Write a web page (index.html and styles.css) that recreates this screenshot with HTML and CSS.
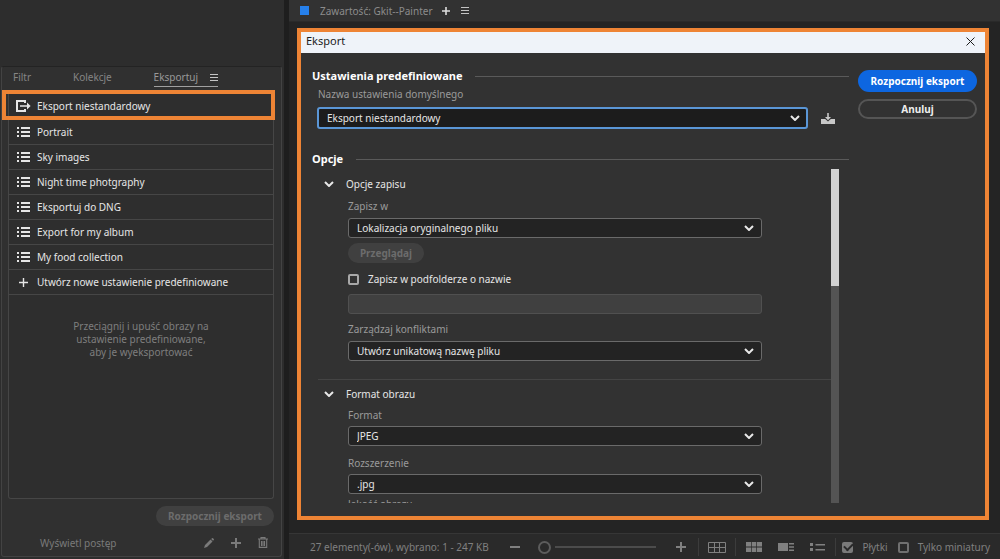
FILE: index.html
```html
<!DOCTYPE html>
<html lang="pl">
<head>
<meta charset="utf-8">
<meta name="viewport" content="width=device-width, initial-scale=1">
<title>Eksport</title>
<link rel="stylesheet" href="styles.css">
</head>
<body>
<svg class="sprite" aria-hidden="true">
  <symbol id="list" viewBox="0 0 13 12"><path d="M0 1h2v2H0zM0 5h2v2H0zM0 9h2v2H0zM4 1h9v2H4zM4 5h9v2H4zM4 9h9v2H4z" fill="currentColor"/></symbol>
  <symbol id="chevron" viewBox="0 0 10 6"><path d="M1 1l4 4 4-4" fill="none" stroke="currentColor" stroke-width="2"/></symbol>
  <symbol id="plus" viewBox="0 0 10 10"><path d="M5 0v10M0 5h10" fill="none" stroke="currentColor" stroke-width="2"/></symbol>
  <symbol id="plus-thin" viewBox="0 0 9 9"><path d="M4.5 0v9M0 4.5h9" fill="none" stroke="currentColor" stroke-width="1.4"/></symbol>
  <symbol id="menu" viewBox="0 0 8 7"><path d="M0 .5h8M0 3.5h8M0 6.5h8" fill="none" stroke="currentColor"/></symbol>
</svg>
<div class="app">
  <aside class="side">
    <section class="panel">
      <nav class="tabs">
        <button class="tab">Filtr</button>
        <button class="tab">Kolekcje</button>
        <button class="tab tab-active">Eksportuj <svg class="menu-icon"><use href="#menu"/></svg></button>
      </nav>
      <div class="presets">
        <ul class="preset-list">
          <li class="preset preset-marked"><button><svg class="preset-icon export-icon" viewBox="0 0 15 12"><path d="M9 3V1H1v10h8V9" fill="none" stroke="currentColor" stroke-width="2"/><path d="M4 5.200h7V2.400L14.600 6 11 9.600V6.800H4z" fill="currentColor"/></svg>Eksport niestandardowy</button></li>
          <li class="preset"><button><svg class="preset-icon"><use href="#list"/></svg>Portrait</button></li>
          <li class="preset"><button><svg class="preset-icon"><use href="#list"/></svg>Sky images</button></li>
          <li class="preset"><button><svg class="preset-icon"><use href="#list"/></svg>Night time photgraphy</button></li>
          <li class="preset"><button><svg class="preset-icon"><use href="#list"/></svg>Eksportuj do DNG</button></li>
          <li class="preset"><button><svg class="preset-icon"><use href="#list"/></svg>Export for my album</button></li>
          <li class="preset"><button><svg class="preset-icon"><use href="#list"/></svg>My food collection</button></li>
          <li class="preset"><button><svg class="preset-icon add-icon"><use href="#plus-thin"/></svg>Utwórz nowe ustawienie predefiniowane</button></li>
        </ul>
        <p class="drop-hint">Przeciągnij i upuść obrazy na<br>ustawienie predefiniowane,<br>aby je wyeksportować</p>
      </div>
      <button class="pill pill-disabled start-side" disabled>Rozpocznij eksport</button>
      <footer class="panel-foot">
        <span class="progress-label">Wyświetl postęp</span>
        <button class="icon-button" aria-label="Edytuj"><svg class="pencil" viewBox="0 0 10 10"><path d="M0 10l1-3 5.500-5.500 2 2L3 9zM7.200 1L8 .2q.6-.4 1 0l.8.8q.4.4 0 1l-.8.8z" fill="currentColor"/></svg></button>
        <button class="icon-button" aria-label="Dodaj"><svg class="plus-icon"><use href="#plus"/></svg></button>
        <button class="icon-button" aria-label="Usuń"><svg class="trash" viewBox="0 0 10 11"><path d="M0 2h10M3 2V.6h4V2M1.300 2v8.400h7.400V2M3.500 4v5M5 4v5M6.500 4v5" fill="none" stroke="currentColor" stroke-width="1.1"/></svg></button>
      </footer>
    </section>
  </aside>

  <main class="content">
    <header class="content-bar">
      <span class="swatch"></span>
      <span class="content-title">Zawartość: Gkit--Painter</span>
      <button class="icon-button" aria-label="Nowa karta"><svg class="plus-small"><use href="#plus"/></svg></button>
      <button class="icon-button" aria-label="Menu"><svg class="menu-icon"><use href="#menu"/></svg></button>
    </header>

    <section class="dialog" role="dialog" aria-labelledby="dialog-title">
      <header class="dialog-bar">
        <h1 id="dialog-title">Eksport</h1>
        <button class="icon-button close" aria-label="Zamknij"><svg class="close-icon" viewBox="0 0 9 9"><path d="M.5.5l8 8M8.500.5l-8 8" fill="none" stroke="currentColor"/></svg></button>
      </header>
      <div class="dialog-body">
        <div class="form">
          <h2 class="heading">Ustawienia predefiniowane</h2>
          <label class="label preset-label" for="preset">Nazwa ustawienia domyślnego</label>
          <div class="preset-row">
            <span class="select select-focus"><select id="preset"><option>Eksport niestandardowy</option></select><svg class="chevron"><use href="#chevron"/></svg></span>
            <button class="icon-button save" aria-label="Zapisz ustawienie"><svg class="save-icon" viewBox="0 0 14 11"><path d="M0 6h4.200L7 8.600 9.800 6H14v5H0z" fill="currentColor"/><path d="M6.200 0h1.600v4H10L7 7.200 4 4h2.200z" fill="currentColor"/></svg></button>
          </div>
          <h2 class="heading heading-options">Opcje</h2>
          <div class="scroller">
            <div class="scroll-content">
              <section class="group">
                <button class="group-title"><svg class="chevron"><use href="#chevron"/></svg>Opcje zapisu</button>
                <div class="fields">
                  <label class="label" for="where">Zapisz w</label>
                  <span class="select"><select id="where"><option>Lokalizacja oryginalnego pliku</option></select><svg class="chevron"><use href="#chevron"/></svg></span>
                  <button class="pill pill-disabled browse" disabled>Przeglądaj</button>
                  <label class="check"><input type="checkbox">Zapisz w podfolderze o nazwie</label>
                  <input class="text-field" type="text" aria-label="Nazwa podfolderu" disabled>
                  <label class="label" for="conflict">Zarządzaj konfliktami</label>
                  <span class="select"><select id="conflict"><option>Utwórz unikatową nazwę pliku</option></select><svg class="chevron"><use href="#chevron"/></svg></span>
                </div>
              </section>
              <section class="group group-format">
                <button class="group-title"><svg class="chevron"><use href="#chevron"/></svg>Format obrazu</button>
                <div class="fields">
                  <label class="label" for="format">Format</label>
                  <span class="select"><select id="format"><option>JPEG</option></select><svg class="chevron"><use href="#chevron"/></svg></span>
                  <label class="label label-ext" for="ext">Rozszerzenie</label>
                  <span class="select"><select id="ext"><option>.jpg</option></select><svg class="chevron"><use href="#chevron"/></svg></span>
                  <span class="label label-quality">Jakość obrazu</span>
                </div>
              </section>
            </div>
            <div class="scrollbar"><div class="thumb"></div></div>
          </div>
        </div>
        <div class="actions">
          <button class="pill pill-primary">Rozpocznij eksport</button>
          <button class="pill pill-outline">Anuluj</button>
        </div>
      </div>
    </section>

    <footer class="status">
      <span class="count">27 elementy(-ów), wybrano: 1 - 247 KB</span>
      <button class="icon-button" aria-label="Pomniejsz"><svg class="minus-icon" viewBox="0 0 10 2"><path d="M0 1h10" stroke="currentColor" stroke-width="2"/></svg></button>
      <input class="zoom" type="range" min="0" max="100" value="0" aria-label="Rozmiar miniatur">
      <button class="icon-button" aria-label="Powiększ"><svg class="plus-icon"><use href="#plus"/></svg></button>
      <button class="icon-button view-grid" aria-label="Siatka"><svg viewBox="0 0 18 11" width="18" height="11"><path d="M.5.5h17v10H.5zM6.500.5v10M11.500.5v10M.5 5.500h17" fill="none" stroke="currentColor"/></svg></button>
      <div class="views">
        <button class="icon-button" aria-label="Miniatury"><svg viewBox="0 0 16 10" width="16" height="10"><path d="M0 0h5v4.500H0zM5.700 0h4.600v4.500H5.700zM11 0h5v4.500h-5zM0 5.500h5V10H0zM5.700 5.500h4.600V10H5.700zM11 5.500h5V10h-5z" fill="currentColor"/></svg></button>
        <button class="icon-button" aria-label="Szczegóły"><svg viewBox="0 0 16 8" width="16" height="8"><path d="M0 0h10v8H0zM11 0h5v1.600h-5zM11 3.200h5v1.600h-5zM11 6.400h5V8h-5z" fill="currentColor"/></svg></button>
        <button class="icon-button" aria-label="Lista"><svg viewBox="0 0 15 8" width="15" height="8"><path d="M0 0h3v3H0zM0 5h3v3H0zM5.500 1h9.500v1.500H5.500zM5.500 6h9.500v1.500H5.500z" fill="currentColor"/></svg></button>
      </div>
      <label class="check status-check"><input type="checkbox" checked>Płytki</label>
      <label class="check status-check"><input type="checkbox">Tylko miniatury</label>
    </footer>
  </main>
</div>
</body>
</html>
```
FILE: styles.css
```css
* { box-sizing: border-box; }

body {
  margin: 0;
  background: #242424;
  color: #e6e6e6;
  font: 10px/14px "Noto Sans", "Open Sans", sans-serif;
}

button, input, select { font: inherit; color: inherit; }
button { margin: 0; padding: 0; border: 0; background: none; }
h1, h2, p, ul { margin: 0; padding: 0; font: inherit; }
ul { list-style: none; }
svg { display: block; flex: none; }

.sprite { position: absolute; width: 0; height: 0; }
.app { display: flex; min-height: 100vh; }

/* left column */
.side {
  display: flex;
  flex: none;
  width: 289px;
  padding: 66px 2px 2px 1px;
  background: #2d2d2d;
  border-right: 5px solid #1e1e1e;
}
.panel {
  display: flex;
  flex: 1;
  flex-direction: column;
  padding: 0 7px 0 6px;
  background: #303030;
  border: 1px solid #434343;
  border-top-color: #232323;
  border-radius: 3px;
}
.tabs {
  display: flex;
  justify-content: space-between;
  align-items: flex-start;
  padding: 3px 56px 0 5px;
  color: #858585;
}
.tab { padding-bottom: 1px; line-height: 15px; }
.tab-active {
  display: flex;
  align-items: center;
  gap: 12px;
  border-bottom: 1px solid #a0a0a0;
  color: #999999;
}
.menu-icon { width: 8px; height: 7px; color: #c4c4c4; }

.presets {
  flex: 1;
  margin-top: 3px;
  border: 1px solid #464646;
  border-top: 0;
  border-radius: 3px;
  background: #2e2e2e;
}
.preset { height: 25px; border-bottom: 1px solid #464646; }
.preset button {
  display: flex;
  align-items: center;
  gap: 7px;
  width: 100%;
  height: 24px;
  padding-left: 8px;
  text-align: left;
}
.preset-icon { width: 13px; height: 12px; }
.preset .export-icon { width: 15px; height: 12px; margin: 0 -1px 0 -1px; }
.preset .add-icon { height: 9px; }
.preset-marked {
  height: 22px;
  margin: 4px 2px 4px -3px;
  border: 0;
  outline: 4px solid #ee8435;
}
.preset-marked button { height: 22px; padding: 2px 0 0 11px; }
.drop-hint {
  margin-top: 25px;
  color: #7e7e7e;
  line-height: 13px;
  text-align: center;
}

.pill {
  height: 20px;
  border-radius: 10px;
  font-weight: 700;
  text-align: center;
}
.pill-disabled { background: #404040; color: #6c6c6c; }
.start-side { align-self: flex-end; width: 118px; margin-top: 7px; }
.panel-foot {
  display: flex;
  align-items: center;
  gap: 17px;
  height: 30px;
  padding: 3px 6px 0 32px;
  color: #7a7a7a;
}
.progress-label { flex: 1; }
.pencil, .plus-icon { width: 10px; height: 10px; }
.trash { width: 10px; height: 11px; }

/* right column */
.content {
  display: flex;
  flex: 1;
  flex-direction: column;
  min-width: 0;
}
.content-bar {
  display: flex;
  align-items: center;
  gap: 11px;
  height: 22px;
  padding-left: 11px;
  background: #323232;
  border-bottom: 1px solid #2a2a2a;
  color: #8c8c8c;
}
.swatch { width: 9px; height: 9px; background: #2680eb; }
.plus-small { width: 8px; height: 8px; color: #dddddd; }
.content-title { margin-right: -2px; }

.dialog {
  display: flex;
  flex: 1;
  flex-direction: column;
  margin: 6px 11px 13px 8px;
  border: 4px solid #ee8435;
  background: #323232;
}
.dialog-bar {
  display: flex;
  align-items: center;
  justify-content: space-between;
  height: 21px;
  padding: 0 10px 3px 5px;
  background: #eff3f9;
  color: #1c1c1c;
}
.dialog-bar h1 { font-size: 11px; }
.close-icon { width: 9px; height: 9px; }
.dialog-body {
  display: flex;
  flex: 1;
  gap: 9px;
  padding: 15px 8px 13px 11px;
}
.form { display: flex; flex: 1; flex-direction: column; min-width: 0; }
.heading {
  display: flex;
  align-items: center;
  gap: 13px;
  color: #ffffff;
  font-size: 11px;
  font-weight: 700;
  line-height: 16px;
}
.heading::after { content: ""; flex: 1; height: 1px; background: #5a5a5a; }
.heading-options { margin-top: 22px; }
.label { color: #9a9a9a; }
.preset-label { margin: 3px 0 6px 6px; }
.preset-row { display: flex; align-items: center; gap: 13px; padding: 0 14px 0 5px; }
.preset-row .select { flex: 1; }
.save-icon { width: 14px; height: 11px; color: #c8c8c8; }

.select { display: grid; align-items: center; }
.select > * { grid-area: 1 / 1; }
.select select {
  width: 100%;
  height: 20px;
  padding: 0 24px 0 8px;
  appearance: none;
  border: 1px solid #6a6a6a;
  border-radius: 3px;
  background: #232323;
}
.select .chevron { justify-self: end; margin-right: 8px; pointer-events: none; }
.select-focus select { height: 22px; border: 2px solid #5a96d6; background: #1c1c1c; }
.chevron { width: 10px; height: 6px; color: #e8e8e8; }

.scroller { display: flex; flex: 1; margin: 2px 10px 0 6px; overflow: hidden; }
.scroll-content { flex: 1; height: 334px; overflow: hidden; }
.scrollbar { width: 8px; background: #545454; }
.thumb { height: 35%; background: #d2d2d2; }

.group-title { display: flex; align-items: center; gap: 12px; height: 14px; margin: 8px 0 8px 6px; }
.fields { display: flex; flex-direction: column; padding: 0 69px 0 30px; }
.fields .label { margin-bottom: 5px; }
.fields .browse { align-self: flex-start; width: 76px; margin: 5px 0 9px; }
.check { display: flex; align-items: center; gap: 9px; }
.check input {
  display: grid;
  place-items: center;
  width: 11px;
  height: 11px;
  margin: 0;
  appearance: none;
  border: 2px solid #a8a8a8;
  border-radius: 2px;
}
.text-field {
  height: 20px;
  margin: 8px 0;
  border: 1px solid #505050;
  border-radius: 3px;
  background: #404040;
}
.group-format { margin-top: 18px; border-top: 1px solid #444444; }
.group-format .group-title { margin: 7px 0 7px 6px; }
.group-format .label { margin-bottom: 4px; }
.fields .label-ext { margin-top: 10px; }
.fields .label-quality { margin-top: 3px; }

.actions { display: flex; flex: none; flex-direction: column; gap: 7px; width: 119px; }
.actions .pill { width: 100%; }
.pill-primary { height: 22px; margin-top: 2px; padding-bottom: 1px; border-radius: 11px; background: #0d66e0; color: #ffffff; }
.pill-outline { border: 2px solid #555555; color: #ededed; line-height: 16px; }

/* status bar */
.status {
  display: flex;
  align-items: center;
  height: 26px;
  padding: 1px 10px 0 21px;
  background: #2a2a2a;
  border-top: 1px solid #363636;
  color: #808080;
}
.count { margin-right: 21px; }
.minus-icon { width: 10px; height: 2px; }
.zoom {
  flex: 1;
  height: 14px;
  margin: 0 20px 0 18px;
  min-width: 0;
  appearance: none;
  background: linear-gradient(#4c4c4c, #4c4c4c) 17px 6px / 100% 2px no-repeat;
}
.zoom::-webkit-slider-thumb {
  width: 13px;
  height: 13px;
  appearance: none;
  border: 2px solid #5c5c5c;
  border-radius: 50%;
}
.status .view-grid {
  display: grid;
  place-items: center;
  width: 38px;
  height: 18px;
  margin-left: 12px;
  border: 1px solid #3c3c3c;
  border-width: 0 1px;
}
.views { display: flex; align-items: center; gap: 16px; height: 18px; padding: 0 10px; border-right: 1px solid #3c3c3c; }
.status-check { margin-left: 6px; }
.status-check + .status-check { margin-left: 10px; }
.status-check input { border-color: #707070; }
.status-check input:checked { background: #7a7a7a; border-color: #7a7a7a; }
.status-check input:checked::after {
  content: "";
  width: 7px;
  height: 4px;
  border: solid #2a2a2a;
  border-width: 0 0 2px 2px;
  transform: translateY(-1px) rotate(-45deg);
}
```
